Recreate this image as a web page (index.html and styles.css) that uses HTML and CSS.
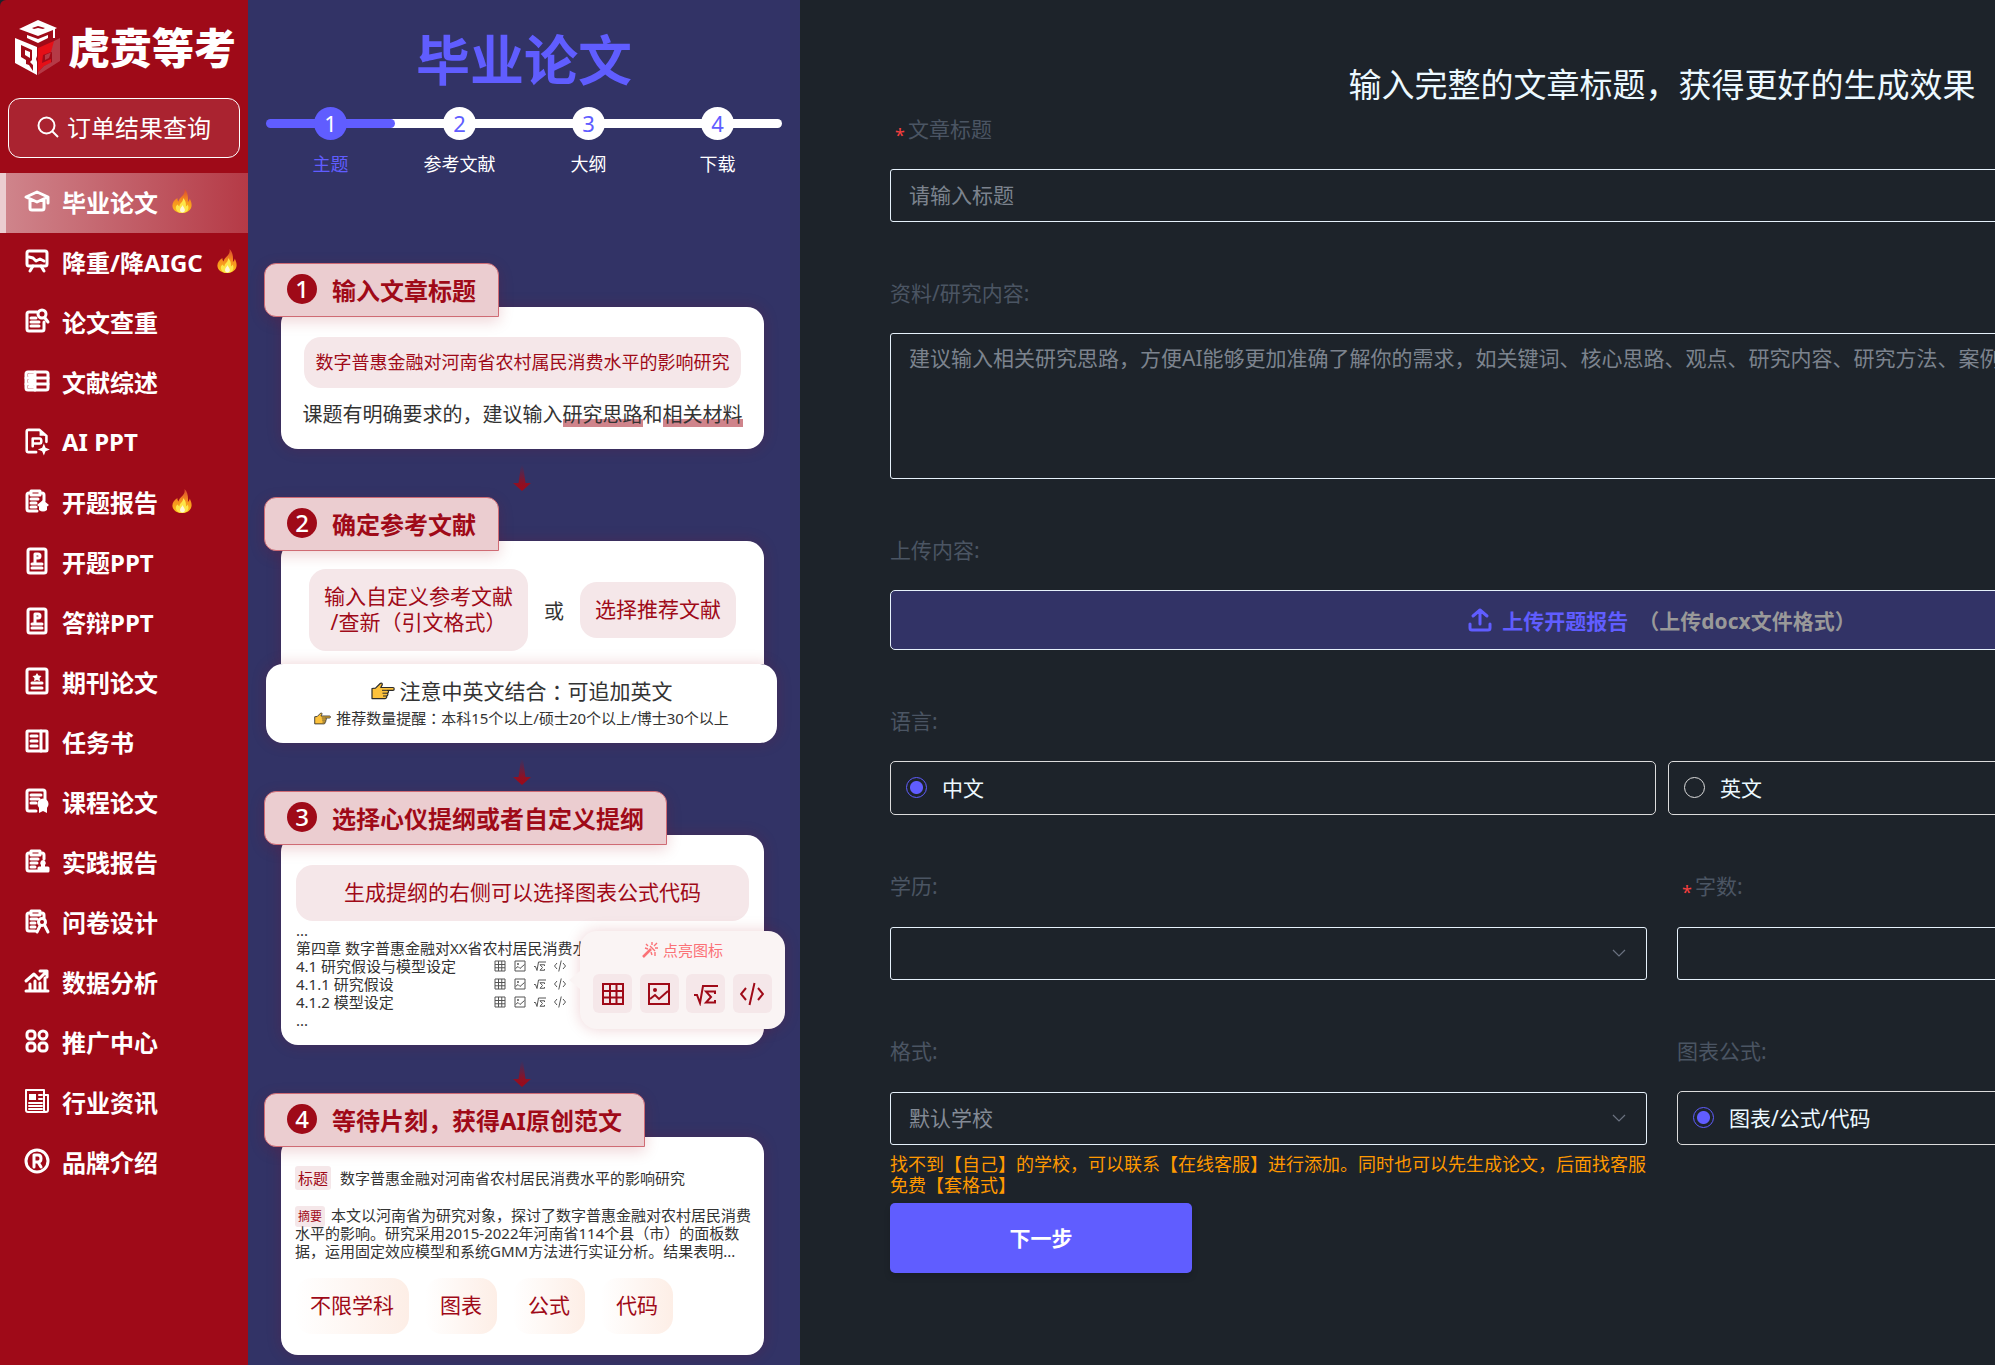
FILE: index.html
```html
<!DOCTYPE html>
<html lang="zh-CN">
<head>
  <meta charset="UTF-8">
  <meta name="viewport" content="width=device-width, initial-scale=1.0">
  <title>毕业论文 - 虎贲等考</title>
  <link rel="stylesheet" href="styles.css">
</head>
<body>
  <!-- shared symbols -->
  <svg class="sprite" aria-hidden="true">
    <linearGradient id="flame-outer" x1="0" y1="0" x2="0" y2="1">
      <stop offset="0" stop-color="#d8452f"/>
      <stop offset="0.45" stop-color="#f58a1f"/>
      <stop offset="1" stop-color="#fdc21b"/>
    </linearGradient>
    <linearGradient id="arrow-fade" x1="0" y1="0" x2="0" y2="1">
      <stop offset="0" stop-color="#9f0a18" stop-opacity="0"/>
      <stop offset="0.7" stop-color="#9f0a18" stop-opacity="0.85"/>
      <stop offset="1" stop-color="#9f0a18"/>
    </linearGradient>
    <symbol id="fire" viewBox="0 0 20 24">
      <path fill="url(#flame-outer)" d="M12.500 0c.6 3.200-.3 4.800-2.300 6.900C8.600 8.600 6.800 10.300 6.500 12.500 5.700 11.700 5.300 10.300 5.400 8.900 2.500 10.600.3 13.600.4 16.700.6 21 4.600 24 10 24s9.500-3 9.600-7.700c.1-2.800-1.100-4.900-1.800-6.800-.4 1.700-.9 2.700-1.900 3.400C16.300 7.800 15.800 3 12.500 0z"/>
      <path fill="#fde54a" d="M11 9c.3 2.300-.6 3.500-2 5-1.200 1.300-1.600 2.300-1.400 3.600-.9-.5-1.600-1.200-1.900-2.200C3.900 16.700 3.600 18.200 4 20c.8 2.600 3.200 4 6 4 3.300 0 5.900-1.700 6.400-4.500.2-1.700-.2-2.800-.7-4-.5 1-1 1.600-1.800 2C14.200 14 13.500 11 11 9z"/>
      <path fill="#fff6d8" d="M10.500 16c-.2 1.800-2.500 2.600-2.500 5 0 1.500 1 2.500 2.400 2.500s2.500-1 2.500-2.500c0-1.800-1.800-3-2.400-5z"/>
    </symbol>
    <symbol id="hand" viewBox="0 0 24 18">
      <path fill="#fdc23c" stroke="#2b2b2b" stroke-width="1.200" stroke-linejoin="round" d="M1 6.500 4.500 6.200 9.200 1.500c1-.9 2.600 0 2 1.400L9.800 5.500H22c1.600 0 1.600 2.800 0 2.800h-5.500c1.500.2 1.400 2.900-.2 2.900 1 .4.700 2.700-.7 2.800.5.800 0 2.600-1.500 2.600H1z"/>
      <path fill="none" stroke="#2b2b2b" d="M11 8.300h5.500M11.500 11.200h4.800M12 14h3.600"/>
    </symbol>
    <symbol id="arrow" viewBox="0 0 18 26">
      <path fill="url(#arrow-fade)" d="M8 0h2l2.500 18H18l-9 8-9-8h5.500z"/>
    </symbol>
    <symbol id="i-table" viewBox="0 0 24 24">
      <path fill="none" stroke="currentColor" stroke-width="2" d="M2 2h20v20H2zM2 9h20M2 15.500h20M9 2v20M15.500 2v20"/>
    </symbol>
    <symbol id="i-image" viewBox="0 0 24 24">
      <path fill="none" stroke="currentColor" stroke-width="2" d="M2 2h20v20H2zM3 17l5-4 4 4 9-8"/>
      <circle cx="8" cy="8" r="2" fill="currentColor"/>
    </symbol>
    <symbol id="i-formula" viewBox="0 0 24 24">
      <path fill="none" stroke="currentColor" stroke-width="2" d="M0 13h3l3 8L9 4h15"/>
      <path fill="none" stroke="currentColor" stroke-width="2" d="M21 12V9.500h-9l5 5.500-5 5.500h9V18"/>
    </symbol>
    <symbol id="i-code" viewBox="0 0 24 24">
      <path fill="none" stroke="currentColor" stroke-width="2" d="M6 6 1 12l5 6M18 6l5 6-5 6M14.500 1l-5 22"/>
    </symbol>
    <symbol id="chevron" viewBox="0 0 14 8">
      <path fill="none" stroke="currentColor" stroke-width="1.200" d="M1 1l6 6 6-6"/>
    </symbol>
  </svg>

  <div class="app">
    <aside class="sidebar">
      <a class="logo" href="#">
        <svg class="logo-mark" viewBox="0 0 45 55" aria-hidden="true">
          <path fill="#fff" d="M4 9 23 0l19 8-2 1v9h-2v-8l-15 6z"/>
          <path fill="#9f0a18" d="M17 8l6-2 7 2-2 1-5-1-4 1z"/>
          <path fill="#fff" d="M12 15l11 4 10-4v3l-10 5-11-5z"/>
          <path fill="#fff" fill-rule="evenodd" d="M0 18l22 9v9l-1 3 1 3v13L0 43zM6 25v12l5 3v4l3 1 4 6v-6l-3-3 2-2V30z"/>
          <path fill="#fff" d="M10 30l5 2v6l-5-3z"/>
          <path fill="#e50f17" d="M23 28l16-7v4l-3 7-8 3-1 8 9-4v4l-7 3-6 6z"/>
          <path fill="#b53a46" d="M39 21l6-3v23L23 55v-3l6-6 8-4V32l-7 3v5l4-2 2-6z"/>
        </svg>
        <span class="logo-text">虎贲等考</span>
      </a>
      <button class="order-btn" type="button">
        <svg viewBox="0 0 22 22" width="22" height="22" aria-hidden="true"><circle cx="9.500" cy="9.500" r="8" fill="none" stroke="#fff" stroke-width="2"/><path stroke="#fff" stroke-width="2" d="M15 15l6 6"/></svg>
        订单结果查询
      </button>
      <nav class="menu">
        <a class="menu-item active" href="#">
          <svg class="icon" viewBox="0 0 24 24"><path d="M1 8l11-5 11 5-11 5zM5 10v9q0 2 2 2h10q2 0 2-2v-9M23 8v6"/></svg>
          毕业论文 <svg class="fire"><use href="#fire"/></svg>
        </a>
        <a class="menu-item" href="#">
          <svg class="icon" viewBox="0 0 24 24"><rect x="2" y="2" width="20" height="15" rx="2"/><path d="M4 8l4 1 3 3 4-2 4 2M8 17l-3 5M16 17l3 5"/></svg>
          降重/降AIGC <svg class="fire"><use href="#fire"/></svg>
        </a>
        <a class="menu-item" href="#">
          <svg class="icon" viewBox="0 0 24 24"><path d="M12 3H4q-2 0-2 2v15q0 2 2 2h13q2 0 2-2v-7M6 9h5M6 13h8M6 17h8M20 9l3 4"/><circle cx="17" cy="5" r="4"/></svg>
          论文查重
        </a>
        <a class="menu-item" href="#">
          <svg class="icon" viewBox="0 0 24 24"><rect x="1" y="3" width="22" height="18" rx="2"/><path d="M10 3v18M1 9h22M1 15h22M4 6h4M4 12h4M4 18h4"/></svg>
          文献综述
        </a>
        <a class="menu-item" href="#">
          <svg class="icon icon-lg" viewBox="0 0 28 30"><path d="M13 28H4q-2 0-2-2V4q0-2 2-2h13l8 7v7M9 21v-9h8q2 0 2 3t-2 3H9"/><path class="solid" d="M17 2v7h8zM22 18l2 5 5 2-5 2-2 5-2-5-5-2 5-2z"/></svg>
          AI PPT
        </a>
        <a class="menu-item" href="#">
          <svg class="icon" viewBox="0 0 24 24"><path d="M6 4H4Q2 4 2 6v14q0 2 2 2h8M17 4q2 0 2 2v6M6 2h9v4H6zM6 10h7M6 14h5M6 18h5"/><path class="solid" d="M18 11l6 5-6 5-6-5zM14 18h8v3q-4 3-8 0z"/></svg>
          开题报告 <svg class="fire"><use href="#fire"/></svg>
        </a>
        <a class="menu-item" href="#">
          <svg class="icon" viewBox="0 0 24 24"><rect x="3" y="0" width="18" height="24" rx="2"/><path d="M10 14V5h3q2 0 2 2t-2 2h-3M7 15h10M7 19h10"/></svg>
          开题PPT
        </a>
        <a class="menu-item" href="#">
          <svg class="icon" viewBox="0 0 24 24"><rect x="3" y="0" width="18" height="24" rx="2"/><path d="M10 14V5h3q2 0 2 2t-2 2h-3M7 15h10M7 19h10"/></svg>
          答辩PPT
        </a>
        <a class="menu-item" href="#">
          <svg class="icon" viewBox="0 0 24 24"><rect x="2" y="0" width="20" height="24" rx="2"/><path d="M7 14h10M7 19h10"/><path class="solid" d="M12 4l1.500 2.500 3 .5-2 2.200.5 3-3-1.200-3 1.200.5-3-2-2.200 3-.5z"/></svg>
          期刊论文
        </a>
        <a class="menu-item" href="#">
          <svg class="icon" viewBox="0 0 24 24"><rect x="2" y="2" width="20" height="20" rx="1"/><path d="M16 2v20M6 7h6M6 12h6M6 17h6"/></svg>
          任务书
        </a>
        <a class="menu-item" href="#">
          <svg class="icon" viewBox="0 0 24 24"><path d="M11 22H4q-2 0-2-2V3q0-2 2-2h14q2 0 2 2v8M6 6h10M6 10h8M6 14h5"/><circle class="solid" cx="18" cy="15" r="5.500"/><path class="solid" d="M14 17v7l4-2 4 2v-7z"/></svg>
          课程论文
        </a>
        <a class="menu-item" href="#">
          <svg class="icon" viewBox="0 0 24 24"><path d="M6 4H4Q2 4 2 6v14q0 2 2 2h8M17 4q2 0 2 2v4M6 2h9v4H6zM6 10h7M6 14h6M6 18h4M14 19h9v3h-9z"/><path class="solid" d="M18 11a3 3 0 0 1 2 5v3h-4v-3a3 3 0 0 1 2-5z"/></svg>
          实践报告
        </a>
        <a class="menu-item" href="#">
          <svg class="icon" viewBox="0 0 24 24"><path d="M6 4H4Q2 4 2 6v14q0 2 2 2h6M17 4q2 0 2 2v3M6 2h9v4H6zM6 10h6M6 14h4M6 18h4M15 17l-3 6M20 17l3 6"/><circle cx="17" cy="13" r="3.500"/></svg>
          问卷设计
        </a>
        <a class="menu-item" href="#">
          <svg class="icon" viewBox="0 0 24 24"><path d="M1 22h22M5 21v-6M10 21v-9M15 21v-7M20 21V9M1 12l8-7 5 5 8-8M15 2h7v6"/></svg>
          数据分析
        </a>
        <a class="menu-item" href="#">
          <svg class="icon" viewBox="0 0 24 24"><rect x="2" y="2" width="8" height="8" rx="3"/><circle cx="18" cy="6" r="4"/><rect x="2" y="14" width="8" height="8" rx="3"/><rect x="14" y="14" width="8" height="8" rx="3"/></svg>
          推广中心
        </a>
        <a class="menu-item" href="#">
          <svg class="icon icon-thin" viewBox="0 0 24 24"><path d="M19 23H3q-2 0-2-2V1h18v20q0 2 2 2t2-2V6h-4M14 6h3M14 10h3M4 14h13M4 17h13M4 20h13"/><path class="solid" d="M4 5h7v6H4z"/></svg>
          行业资讯
        </a>
        <a class="menu-item" href="#">
          <svg class="icon" viewBox="0 0 24 24"><circle cx="12" cy="12" r="11"/><path d="M9 18V6h4q3 0 3 3.500T13 13H9M13 13l3 5"/></svg>
          品牌介绍
        </a>
      </nav>
    </aside>

    <section class="guide">
      <h1>毕业论文</h1>
      <ol class="steps">
        <li class="step current"><span class="step-num">1</span><span class="step-name">主题</span></li>
        <li class="step"><span class="step-num">2</span><span class="step-name">参考文献</span></li>
        <li class="step"><span class="step-num">3</span><span class="step-name">大纲</span></li>
        <li class="step"><span class="step-num">4</span><span class="step-name">下载</span></li>
      </ol>

      <div class="guide-list">
        <h2 class="tag"><span class="tag-num">1</span>输入文章标题</h2>
        <div class="card card-topic">
          <p class="pill pill-sm">数字普惠金融对河南省农村属民消费水平的影响研究</p>
          <p class="hint">课题有明确要求的，建议输入<mark>研究思路</mark>和<mark>相关材料</mark></p>
        </div>
        <svg class="arrow"><use href="#arrow"/></svg>

        <h2 class="tag"><span class="tag-num">2</span>确定参考文献</h2>
        <div class="card card-refs">
          <p class="pill">输入自定义参考文献<br>/查新（引文格式）</p>
          <span>或</span>
          <p class="pill">选择推荐文献</p>
        </div>
        <div class="notice">
          <p class="notice-main"><svg class="hand"><use href="#hand"/></svg>注意中英文结合<span class="colon">：</span>可追加英文</p>
          <p class="notice-sub"><svg class="hand hand-sm"><use href="#hand"/></svg>推荐数量提醒<span class="colon">：</span>本科15个以上/硕士20个以上/博士30个以上</p>
        </div>
        <svg class="arrow"><use href="#arrow"/></svg>

        <h2 class="tag"><span class="tag-num">3</span>选择心仪提纲或者自定义提纲</h2>
        <div class="card card-outline">
          <p class="pill">生成提纲的右侧可以选择图表公式代码</p>
          <ul class="outline">
            <li>...</li>
            <li>第四章 数字普惠金融对XX省农村居民消费水平</li>
            <li><span class="outline-name">4.1 研究假设与模型设定</span><svg><use href="#i-table"/></svg><svg><use href="#i-image"/></svg><svg><use href="#i-formula"/></svg><svg><use href="#i-code"/></svg></li>
            <li><span class="outline-name">4.1.1 研究假设</span><svg><use href="#i-table"/></svg><svg><use href="#i-image"/></svg><svg><use href="#i-formula"/></svg><svg><use href="#i-code"/></svg></li>
            <li><span class="outline-name">4.1.2 模型设定</span><svg><use href="#i-table"/></svg><svg><use href="#i-image"/></svg><svg><use href="#i-formula"/></svg><svg><use href="#i-code"/></svg></li>
            <li>...</li>
          </ul>
          <div class="popover">
            <p class="popover-title">
              <svg viewBox="0 0 16 16" width="16" height="16"><path fill="none" stroke="currentColor" stroke-width="2.500" d="M1 15l8-8"/><path fill="none" stroke="currentColor" stroke-width="1.400" d="M10 0v3M4 2l2 2M3 6l3 1M13 10v4M16 6h-3M9 10l1 3M15 1l-3 3M8 4l5 5"/></svg>
              点亮图标
            </p>
            <div class="popover-icons">
              <span><svg><use href="#i-table"/></svg></span>
              <span><svg><use href="#i-image"/></svg></span>
              <span><svg><use href="#i-formula"/></svg></span>
              <span><svg><use href="#i-code"/></svg></span>
            </div>
          </div>
        </div>
        <svg class="arrow"><use href="#arrow"/></svg>

        <h2 class="tag"><span class="tag-num">4</span>等待片刻，获得AI原创范文</h2>
        <div class="card card-result">
          <p class="result-title"><span class="badge">标题</span>数字普惠金融对河南省农村居民消费水平的影响研究</p>
          <p class="result-text"><span class="badge badge-sm">摘要</span>本文以河南省为研究对象，探讨了数字普惠金融对农村居民消费<br>水平的影响。研究采用2015-2022年河南省114个县（市）的面板数<br>据，运用固定效应模型和系统GMM方法进行实证分析。结果表明...</p>
          <div class="chips"><span>不限学科</span><span>图表</span><span>公式</span><span>代码</span></div>
        </div>
      </div>
    </section>

    <main class="content">
      <form class="paper-form">
        <h2 class="form-title">输入完整的文章标题，获得更好的生成效果</h2>

        <div class="field">
          <label class="label required" for="title">文章标题</label>
          <input class="control" id="title" type="text" placeholder="请输入标题">
        </div>

        <div class="field">
          <label class="label" for="material">资料/研究内容:</label>
          <textarea class="control" id="material" placeholder="建议输入相关研究思路，方便AI能够更加准确了解你的需求，如关键词、核心思路、观点、研究内容、研究方法、案例、数据、政策等"></textarea>
        </div>

        <div class="field">
          <label class="label" for="upload">上传内容:</label>
          <button class="upload" id="upload" type="button">
            <svg viewBox="0 0 24 24" width="24" height="24" aria-hidden="true"><path fill="none" stroke="currentColor" stroke-width="3" stroke-linecap="round" stroke-linejoin="round" d="M12 16V2M5 8l7-6 7 6M2 16v4q0 2 2 2h16q2 0 2-2v-4"/></svg>
            上传开题报告 <span>（上传docx文件格式）</span>
          </button>
        </div>

        <div class="field">
          <span class="label" id="lang-label">语言:</span>
          <div class="radio-row" role="radiogroup" aria-labelledby="lang-label">
            <label class="radio"><input type="radio" name="lang" checked>中文</label>
            <label class="radio"><input type="radio" name="lang">英文</label>
          </div>
        </div>

        <div class="columns">
          <div class="field">
            <label class="label" for="degree">学历:</label>
            <div class="select-box">
              <select class="control" id="degree"><option></option></select>
              <svg><use href="#chevron"/></svg>
            </div>
          </div>
          <div class="field">
            <label class="label required" for="words">字数:</label>
            <div class="select-box">
              <select class="control" id="words"><option></option></select>
              <svg><use href="#chevron"/></svg>
            </div>
          </div>
        </div>

        <div class="columns">
          <div class="field">
            <label class="label" for="format">格式:</label>
            <div class="select-box">
              <select class="control" id="format"><option>默认学校</option></select>
              <svg><use href="#chevron"/></svg>
            </div>
            <p class="tip">找不到【自己】的学校，可以联系【在线客服】进行添加。同时也可以先生成论文，后面找客服免费【套格式】</p>
          </div>
          <div class="field">
            <span class="label" id="chart-label">图表公式:</span>
            <div class="radio-row" role="radiogroup" aria-labelledby="chart-label">
              <label class="radio"><input type="radio" name="chart" checked>图表/公式/代码</label>
            </div>
          </div>
        </div>

        <button class="next" type="submit">下一步</button>
      </form>
    </main>
  </div>
</body>
</html>
```
FILE: styles.css
```css
* {
  box-sizing: border-box;
}
body {
  margin: 0;
  background: #1d232a;
  color: #ecf9ff;
  font-family: "Noto Sans", "Noto Sans CJK SC", sans-serif;
  overflow-x: hidden;
}
h1, h2, p, ol, ul {
  margin: 0;
  padding: 0;
}
ol, ul {
  list-style: none;
}
a {
  color: inherit;
  text-decoration: none;
}
button, input, textarea, select {
  font-family: inherit;
}
.sprite {
  position: absolute;
  width: 0;
  height: 0;
}
.app {
  display: flex;
  min-height: 100vh;
}

/* sidebar */
.sidebar {
  flex: 0 0 248px;
  background: #9f0a18;
  color: #fff;
  border-top-left-radius: 6px;
}
.logo {
  display: flex;
  align-items: center;
  gap: 8px;
  padding: 20px 0 0 15px;
}
.logo-mark {
  width: 45px;
  height: 55px;
}
.logo-text {
  font-size: 42px;
  font-weight: 900;
  line-height: 55px;
  white-space: nowrap;
}
.order-btn {
  display: flex;
  align-items: center;
  justify-content: center;
  gap: 8px;
  width: calc(100% - 16px);
  height: 60px;
  margin: 23px 8px 15px;
  padding-bottom: 4px;
  border: 1px solid #fff;
  border-radius: 12px;
  background: #aa2330;
  color: #fff;
  font-size: 24px;
}
.menu-item {
  display: flex;
  align-items: center;
  height: 60px;
  padding: 0 0 4px 18px;
  border-left: 6px solid transparent;
  font-size: 24px;
  font-weight: bold;
  white-space: nowrap;
}
.menu-item.active {
  border-left-color: #ebcdd0;
  background: linear-gradient(90deg, #cf848b, #b53a46) padding-box;
}
.icon {
  width: 26px;
  height: 26px;
  margin-right: 12px;
  padding: 1px;
  fill: none;
  stroke: #fff;
  stroke-width: 3;
  stroke-linejoin: round;
  stroke-linecap: round;
  overflow: visible;
}
.icon-lg {
  height: 30px;
}
.icon-thin {
  stroke-width: 2;
}
.icon .solid {
  fill: #fff;
  stroke: none;
}
.fire {
  width: 20px;
  height: 24px;
  margin-left: 14px;
}

/* guide column */
.guide {
  flex: 0 0 552px;
  min-width: 0;
  padding: 28px 16px 9px;
  background: #323366;
}
.guide h1 {
  color: #605dff;
  font-size: 54px;
  line-height: 64px;
  text-align: center;
}
.steps {
  display: flex;
  margin: 15px 2px 85px;
  background: linear-gradient(#fff, #fff) center 12px / calc(100% - 10px) 9px no-repeat;
}
.step {
  position: relative;
  flex: 1;
  display: flex;
  flex-direction: column;
  align-items: center;
  gap: 10px;
  font-size: 18px;
  line-height: 28px;
}
/* rounded ends of the progress line */
.step:first-child::before, .step:last-child::before {
  content: "";
  position: absolute;
  top: 12px;
  left: 0;
  right: 0;
  height: 9px;
  border-radius: 5px;
  background: #fff;
}
.step.current::before {
  background: #605dff;
}
.step-num {
  position: relative;
  width: 33px;
  height: 33px;
  border-radius: 50%;
  background: #fff;
  color: #605dff;
  font-size: 22px;
  line-height: 33px;
  text-align: center;
}
.step-name {
  color: #fff;
}
.current .step-num {
  background: #605dff;
  color: #fff;
}
.current .step-name {
  color: #605dff;
}
.guide-list {
  display: flex;
  flex-direction: column;
  align-items: stretch;
  color: #333;
}
.tag {
  position: relative;
  z-index: 1;
  align-self: flex-start;
  display: flex;
  align-items: center;
  gap: 15px;
  height: 54px;
  padding: 0 22px 2px;
  border: 1px solid #cf6b74;
  border-radius: 12px 12px 0 12px;
  background: #ebcdd0;
  box-shadow: 0 4px 15px rgba(159, 10, 24, 0.18);
  color: #9f0a18;
  font-size: 24px;
  white-space: nowrap;
}
.tag-num {
  width: 30px;
  height: 30px;
  border-radius: 50%;
  background: #9f0a18;
  color: #fff;
  font-weight: 500;
  line-height: 30px;
  text-align: center;
}
.card {
  position: relative;
  margin: -10px 20px 0 17px;
  border-radius: 17px;
  background: #fff;
  box-shadow: 0 0 15px rgba(159, 10, 24, 0.18);
}
.pill {
  padding: 11px 15px 13px;
  border-radius: 17px;
  background: #f5e7e9;
  color: #9f0a18;
  font-size: 21px;
  line-height: 32px;
  text-align: center;
}
.pill-sm {
  margin: 0 3px;
  padding: 12px 0;
  font-size: 18px;
  line-height: 27px;
}
.card-topic {
  padding: 30px 20px 19px;
}
.hint {
  display: flex;
  justify-content: center;
  margin-top: 12px;
  font-size: 20px;
  line-height: 30px;
  white-space: nowrap;
}
.hint mark {
  background: linear-gradient(transparent 19px, #cf848b 19px, #cf848b 27px, transparent 27px);
  color: inherit;
}
.arrow {
  align-self: center;
  width: 18px;
  height: 26px;
  margin: 16px 4px 6px 0;
}
.card-refs {
  display: flex;
  align-items: center;
  justify-content: center;
  gap: 16px;
  padding: 28px 0 13px;
  border-radius: 17px 17px 0 0;
  font-size: 20px;
}
.card-refs .pill:first-child {
  padding: 14px 15px 16px;
  line-height: 26px;
}
.notice {
  position: relative;
  margin: 0 7px 0 2px;
  padding: 11px 0;
  border-radius: 17px;
  background: #fff;
  box-shadow: 0 0 15px rgba(159, 10, 24, 0.18);
}
.notice p {
  display: flex;
  align-items: center;
  justify-content: center;
}
.notice-main {
  font-size: 21px;
  line-height: 32px;
}
.notice-sub {
  font-size: 15px;
  line-height: 22px;
  padding-bottom: 3px;
}
.colon {
  font-family: "Noto Sans CJK TC", sans-serif;
}
.hand {
  width: 24px;
  height: 18px;
  margin-right: 5px;
}
.hand-sm {
  width: 17px;
  height: 13px;
}
.card-outline {
  padding: 30px 15px 16px;
}
.outline {
  font-size: 15px;
  line-height: 16px;
}
.outline li {
  display: flex;
  align-items: center;
  gap: 8px;
  height: 18px;
  padding-bottom: 1px;
  overflow: hidden;
  white-space: nowrap;
}
.outline-name {
  width: 190px;
}
.outline svg {
  width: 12px;
  height: 12px;
  color: #555;
}
.popover {
  position: absolute;
  top: 96px;
  right: -21px;
  width: 205px;
  height: 98px;
  padding: 7px 13px;
  border-radius: 17px;
  background: #faf4f4;
  box-shadow: 0 0 15px rgba(159, 10, 24, 0.18);
}
.popover::before {
  content: "";
  position: absolute;
  top: 40px;
  left: -11px;
  border: solid transparent;
  border-width: 9px 11px 9px 0;
  border-right-color: #faf4f4;
}
.popover-title {
  display: flex;
  align-items: center;
  justify-content: center;
  gap: 5px;
  color: #fa7176;
  font-size: 15px;
  line-height: 24px;
}
.popover-icons {
  display: flex;
  justify-content: space-between;
  margin-top: 12px;
}
.popover-icons span {
  display: flex;
  align-items: center;
  justify-content: center;
  width: 39px;
  height: 39px;
  border-radius: 6px;
  background: #f5e7e9;
  color: #9f0a18;
}
.popover-icons svg {
  width: 24px;
  height: 24px;
}
.card-result {
  padding: 29px 0 21px 14px;
  font-size: 15px;
}
.result-title {
  display: flex;
  align-items: center;
  gap: 9px;
  line-height: 24px;
}
.badge {
  padding: 0 3px;
  border-radius: 3px;
  background: #f5e7e9;
  color: #9f0a18;
}
.badge-sm {
  margin-right: 6px;
  padding: 2px 3px;
  font-size: 12px;
  line-height: 12px;
}
.result-text {
  margin-top: 16px;
  line-height: 18px;
  white-space: nowrap;
}
.chips {
  display: flex;
  gap: 16px;
  margin-top: 18px;
}
.chips span {
  padding: 11px 15px 13px;
  border-radius: 17px;
  background: linear-gradient(90deg, #fff, #fdeee6);
  color: #9f0a18;
  font-size: 21px;
  line-height: 32px;
}

/* form: keeps its own minimum width and is cut by the window edge */
.content {
  flex: 1;
  min-width: 0;
  overflow: hidden;
  padding: 63px 90px 60px;
}
.paper-form {
  min-width: 1544px;
}
.form-title {
  margin-bottom: 8px;
  font-size: 33px;
  font-weight: normal;
  line-height: 44px;
  text-align: center;
}
.field {
  margin-bottom: 57px;
}
.label {
  display: block;
  height: 30px;
  margin-bottom: 24px;
  color: #4b5563;
  font-size: 21px;
  line-height: 28px;
}
.required::before {
  content: "*";
  margin: 0 3px 0 5px;
  color: #f53f3f;
  font-size: 18px;
  line-height: 18px;
  vertical-align: -5px;
}
.control {
  display: block;
  width: 100%;
  height: 53px;
  padding: 0 18px 2px;
  border: 1px solid #e6f1fb;
  border-radius: 3px;
  outline: none;
  background: transparent;
  color: #848b96;
  font-size: 21px;
}
.control::placeholder {
  color: #7c838e;
}
textarea.control {
  height: 146px;
  padding: 8px 18px;
  line-height: 32px;
  resize: none;
}
.upload {
  display: flex;
  align-items: center;
  justify-content: center;
  gap: 10px;
  width: 100%;
  height: 60px;
  border: 1px solid #e6f1fb;
  border-radius: 5px;
  background: #323366;
  color: #605dff;
  font-size: 21px;
  font-weight: bold;
}
.upload span {
  color: #999;
}
.radio-row {
  display: flex;
  gap: 12px;
}
.radio {
  flex: 1;
  display: flex;
  align-items: center;
  gap: 15px;
  height: 54px;
  padding: 0 0 2px 15px;
  border: 1px solid #dcdcdc;
  border-radius: 5px;
  font-size: 21px;
}
.radio input {
  appearance: none;
  width: 21px;
  height: 21px;
  margin: 0;
  border: 1px solid #dcdcdc;
  border-radius: 50%;
}
.radio input:checked {
  border-color: #605dff;
  background: radial-gradient(circle, #605dff 6px, transparent 7px);
}
.columns {
  display: grid;
  grid-template-columns: 1fr 1fr;
  gap: 30px;
}
.select-box {
  position: relative;
  padding-top: 1px;
}
.select-box select {
  appearance: none;
}
.select-box svg {
  position: absolute;
  top: 23px;
  right: 21px;
  width: 14px;
  height: 8px;
  color: #6b7280;
  pointer-events: none;
}
.columns:last-of-type .field {
  margin-bottom: 7px;
}
.tip {
  margin-top: 9px;
  color: #ff9900;
  font-size: 18px;
  line-height: 21px;
}
.next {
  display: block;
  width: 302px;
  height: 70px;
  padding-bottom: 3px;
  border: none;
  border-radius: 5px;
  background: #605dff;
  box-shadow: 0 4px 6px rgba(0, 0, 0, 0.15);
  color: #fff;
  font-size: 21px;
  font-weight: bold;
}
```
